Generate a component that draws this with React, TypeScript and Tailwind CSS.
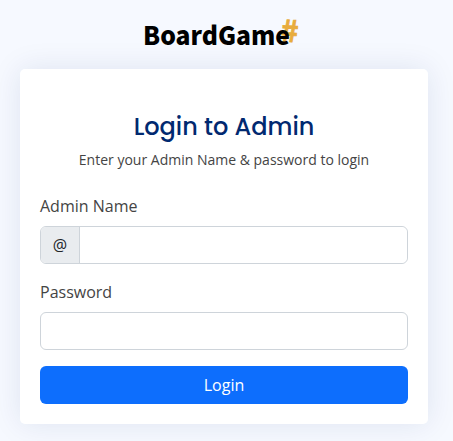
export default function App() {
  return (
    <main className="h-[441px] w-[453px] overflow-hidden bg-[#f6f9ff] font-['Open_Sans',sans-serif] text-base leading-6 text-[#444444]">
      <header className="flex h-[69px] pl-[143px] pt-3">
        <div className="relative h-10 w-[156px]">
          <span className="absolute left-[138px] top-[3px] origin-center rotate-3 font-['Noto_Sans_CJK_SC',sans-serif] text-[30px] font-bold leading-7 text-[#e8ac3d] [-webkit-text-stroke:0.7px_#e8ac3d]">#</span>
          <span className="relative inline-block origin-center scale-y-105 font-['Noto_Sans_CJK_SC',sans-serif] text-[24.7px] font-black leading-[42px] text-black">BoardGame</span>
        </div>
      </header>
      <section className="ml-5 h-[355px] w-[408px] rounded-[5px] bg-white px-5 shadow-[0_0_30px_rgba(1,41,112,0.1)]">
        <div className="pt-11 text-center">
          <h1 className="font-[Poppins,Inter,sans-serif] text-2xl font-medium leading-7 text-[#012970]">Login to Admin</h1>
          <p className="mt-2 text-sm leading-[21px]">Enter your Admin Name &amp; password to login</p>
        </div>
        <form className="mt-6" onSubmit={(event) => event.preventDefault()}>
          <label htmlFor="admin-name" className="mb-2 block">Admin Name</label>
          <div className="flex h-[38px] rounded-md border border-[#ced4da]">
            <span className="flex w-[39px] items-center justify-center rounded-l-[5px] border-r border-[#ced4da] bg-[#e9ecef] text-[#212529]">@</span>
            <input id="admin-name" className="min-w-0 flex-1 rounded-r-md bg-white px-3 outline-none" />
          </div>
          <label htmlFor="password" className="mb-2 mt-4 block">Password</label>
          <input id="password" type="password" className="block h-[38px] w-full rounded-md border border-[#ced4da] px-3 outline-none" />
          <button type="submit" className="mt-4 h-[38px] w-full rounded-md bg-[#0d6efd] text-white">Login</button>
        </form>
      </section>
    </main>
  );
}
